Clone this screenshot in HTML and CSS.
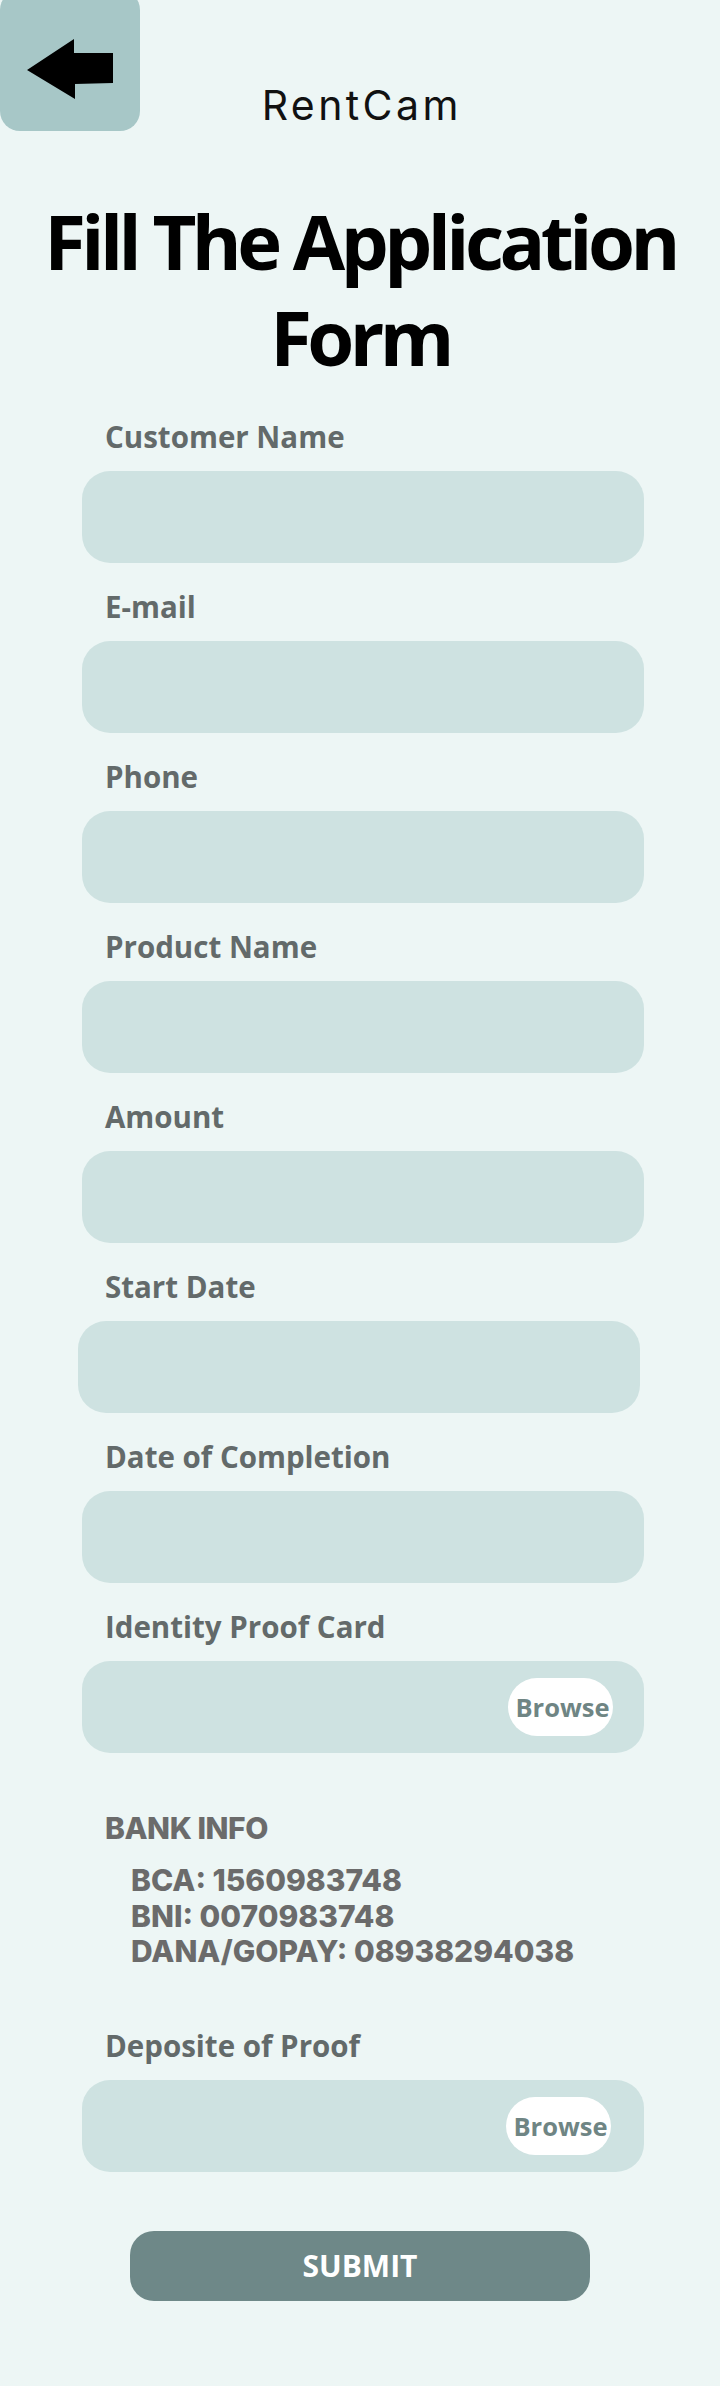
FILE: index.html
```html
<!DOCTYPE html>
<html lang="en">
<head>
<meta charset="utf-8">
<title>RentCam - Application Form</title>
<link rel="stylesheet" href="styles.css">
</head>
<body>
<header class="topbar">
  <a class="back-btn" href="#" aria-label="Back">
    <svg class="back-icon" width="140" height="141" viewBox="0 0 140 141">
      <polygon points="27,80 74,49 74,63 113,63 113,93 75,94 75,109" fill="#000"/>
    </svg>
  </a>
  <div class="brand">RentCam</div>
  <div></div>
</header>

<h1 class="title">Fill The Application Form</h1>

<form class="form">
  <div class="field">
    <label class="field-label">Customer Name</label>
    <input class="field-input" type="text">
  </div>
  <div class="field">
    <label class="field-label">E-mail</label>
    <input class="field-input" type="email">
  </div>
  <div class="field">
    <label class="field-label">Phone</label>
    <input class="field-input" type="tel">
  </div>
  <div class="field">
    <label class="field-label">Product Name</label>
    <input class="field-input" type="text">
  </div>
  <div class="field">
    <label class="field-label">Amount</label>
    <input class="field-input" type="text">
  </div>
  <div class="field">
    <label class="field-label">Start Date</label>
    <input class="field-input field-input--shift" type="text">
  </div>
  <div class="field">
    <label class="field-label">Date of Completion</label>
    <input class="field-input" type="text">
  </div>
  <div class="field">
    <label class="field-label">Identity Proof Card</label>
    <div class="file-box">
      <span class="browse">Browse</span>
    </div>
  </div>

  <section class="bank">
    <h2 class="bank-title">BANK INFO</h2>
    <div class="bank-lines">
      <div>BCA: 1560983748</div>
      <div>BNI: 0070983748</div>
      <div>DANA/GOPAY: 08938294038</div>
    </div>
  </section>

  <div class="field">
    <label class="field-label">Deposite of Proof</label>
    <div class="file-box">
      <span class="browse browse--shift">Browse</span>
    </div>
  </div>

  <div class="submit-row">
    <button class="submit" type="button">SUBMIT</button>
  </div>
</form>
</body>
</html>
```

FILE: styles.css
```css
* { box-sizing: border-box; }

body {
  margin: 0;
  background: #edf6f5;
  font-family: "Open Sans", "Noto Sans", sans-serif;
  height: 2386px;
  overflow: hidden;
}

.topbar {
  display: grid;
  grid-template-columns: 140px 1fr 140px;
  height: 131px;
}

.back-btn {
  display: block;
  width: 140px;
  height: 141px;
  margin-top: -10px;
  background: #a7c7c7;
  border-radius: 20px;
}

.back-icon { display: block; }

.brand {
  font-family: "Inter", sans-serif;
  font-weight: 400;
  font-size: 41px;
  line-height: 50px;
  padding-top: 80px;
  padding-left: 3.4px;
  text-align: center;
  color: #111;
  letter-spacing: 3.4px;
}

.title {
  margin: 62px 0 0;
  font-family: "Open Sans", sans-serif;
  font-weight: 700;
  font-size: 76px;
  line-height: 96px;
  letter-spacing: -0.06em;
  text-align: center;
  color: #000;
}

.form {
  margin-top: 32px;
  padding: 0 76px 0 82px;
}

.field {
  display: flex;
  flex-direction: column;
  margin-bottom: 24px;
}

.field-label {
  display: block;
  padding-left: 23px;
  font-weight: 700;
  font-size: 29.5px;
  line-height: 40px;
  color: #636a6a;
  margin-bottom: 14px;
}

.field-input {
  display: block;
  width: 100%;
  height: 92px;
  border: 0;
  border-radius: 28px;
  background: #cee2e1;
  outline: none;
  font: inherit;
}

.field-input--shift {
  margin-left: -4px;
}

.file-box {
  display: flex;
  align-items: center;
  justify-content: flex-end;
  height: 92px;
  border-radius: 28px;
  background: #cee2e1;
  padding-right: 31px;
}

.browse {
  display: flex;
  align-items: center;
  justify-content: center;
  width: 105px;
  height: 58px;
  border-radius: 29px;
  background: #fff;
  color: #6f8584;
  font-weight: 700;
  font-size: 25.5px;
  white-space: nowrap;
  padding-left: 4px;
}

.browse--shift { margin-right: 2px; }

.bank {
  margin-top: 57px;
  padding-left: 23px;
  font-family: "Inter", sans-serif;
  font-weight: 800;
  color: #6b6b6b;
}

.bank-title {
  margin: 0;
  font-size: 30px;
  font-weight: 800;
  line-height: 36px;
  letter-spacing: -0.015em;
}

.bank-lines {
  margin-top: 17px;
  padding-left: 26px;
  font-size: 30px;
  line-height: 35.5px;
  letter-spacing: 0;
}

.bank + .field {
  margin-top: 56px;
}

.submit-row {
  display: flex;
  justify-content: center;
  margin-left: -82px;
  margin-right: -76px;
  padding-top: 35px;
}

.submit {
  width: 460px;
  height: 70px;
  border: 0;
  border-radius: 24px;
  background: #6e8888;
  color: #fff;
  font-family: "Open Sans", sans-serif;
  font-weight: 700;
  font-size: 30px;
  padding: 0;
}
```
